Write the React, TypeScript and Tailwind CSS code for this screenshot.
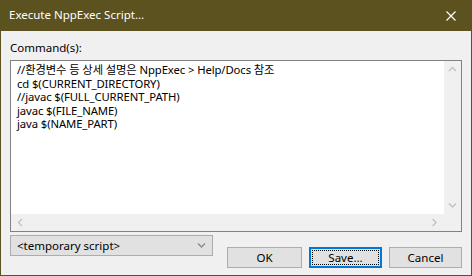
import React from "react";

const font = { fontFamily: '"Noto Sans", "Noto Sans CJK KR", sans-serif' };

function Chevron({ dir, className, color = "#c2c2c2" }: { dir: "up" | "down" | "left" | "right"; className?: string; color?: string }) {
  const paths: Record<string, string> = {
    up: "M1 5 L4.5 1.5 L8 5",
    down: "M1 1.5 L4.5 5 L8 1.5",
    left: "M5 1 L1.5 4.5 L5 8",
    right: "M1.5 1 L5 4.5 L1.5 8",
  };
  const w = dir === "up" || dir === "down" ? 9 : 7;
  const h = dir === "up" || dir === "down" ? 7 : 9;
  return (
    <svg width={w} height={h} viewBox={`0 0 ${w} ${h}`} className={className}>
      <path d={paths[dir]} fill="none" stroke={color} strokeWidth="1.4" />
    </svg>
  );
}

export default function App() {
  const lines = [
    "//환경변수 등 상세 설명은 NppExec > Help/Docs 참조",
    "cd $(CURRENT_DIRECTORY)",
    "//javac $(FULL_CURRENT_PATH)",
    "javac $(FILE_NAME)",
    "java $(NAME_PART)",
  ];
  return (
    <div className="w-[472px] h-[276px] flex flex-col bg-[#5b5220] text-[12px] text-black" style={font}>
      <div className="h-[31px] flex items-center justify-between pl-[9px] pr-[16px] text-white">
        <span className="text-[11.5px] leading-none mt-[-1px]">Execute NppExec Script...</span>
        <svg width="10" height="10" viewBox="0 0 10 10">
          <path d="M0.5 0.5 L9.5 9.5 M9.5 0.5 L0.5 9.5" stroke="white" strokeWidth="1.2" />
        </svg>
      </div>
      <div className="flex-1 mx-[1px] mb-[1px] bg-[#f0f0f0] flex flex-col pl-[9px] pr-[9px] pt-[9px]">
        <div className="h-[16px] leading-[16px] text-[11.5px]">Command(s):</div>
        <div className="mt-[4px] h-[172px] border border-[#828282] bg-white flex flex-col">
          <div className="flex-1 flex min-h-0">
            <div className="flex-1 pl-[6px] pt-[2px] leading-[13.5px] text-[11.3px] tracking-[-0.1px]">
              {lines.map((l, i) => (
                <div key={i} className="whitespace-pre h-[13.5px]">{l}</div>
              ))}
            </div>
            <div className="w-[17px] bg-[#f0f0f0] flex flex-col items-center justify-between py-[5px]">
              <Chevron dir="up" />
              <Chevron dir="down" />
            </div>
          </div>
          <div className="h-[17px] flex">
            <div className="flex-1 bg-[#f0f0f0] flex items-center justify-between px-[6px]">
              <Chevron dir="left" />
              <Chevron dir="right" />
            </div>
            <div className="w-[17px] bg-[#f0f0f0]" />
          </div>
        </div>
        <div className="flex items-start text-[11.5px]">
          <div className="mt-[3px] w-[203px] h-[21px] bg-[#e1e1e1] border border-[#adadad] flex items-center justify-between pl-[6px] pr-[6px]">
            <span className="leading-none">&lt;temporary script&gt;</span>
            <Chevron dir="down" color="#8a8a8a" />
          </div>
          <div className="ml-[14px] mt-[15px] flex gap-[7px]">
            <div className="w-[75px] h-[21px] bg-[#e1e1e1] border border-[#adadad] flex items-center justify-center">OK</div>
            <div className="w-[73px] h-[21px] bg-[#e1e1e1] border-2 border-[#0078d7] p-[1px]">
              <div className="w-full h-full border border-dotted border-black flex items-center justify-center">Save...</div>
            </div>
            <div className="w-[73px] h-[21px] bg-[#e1e1e1] border border-[#adadad] flex items-center justify-center">Cancel</div>
          </div>
        </div>
      </div>
    </div>
  );
}
